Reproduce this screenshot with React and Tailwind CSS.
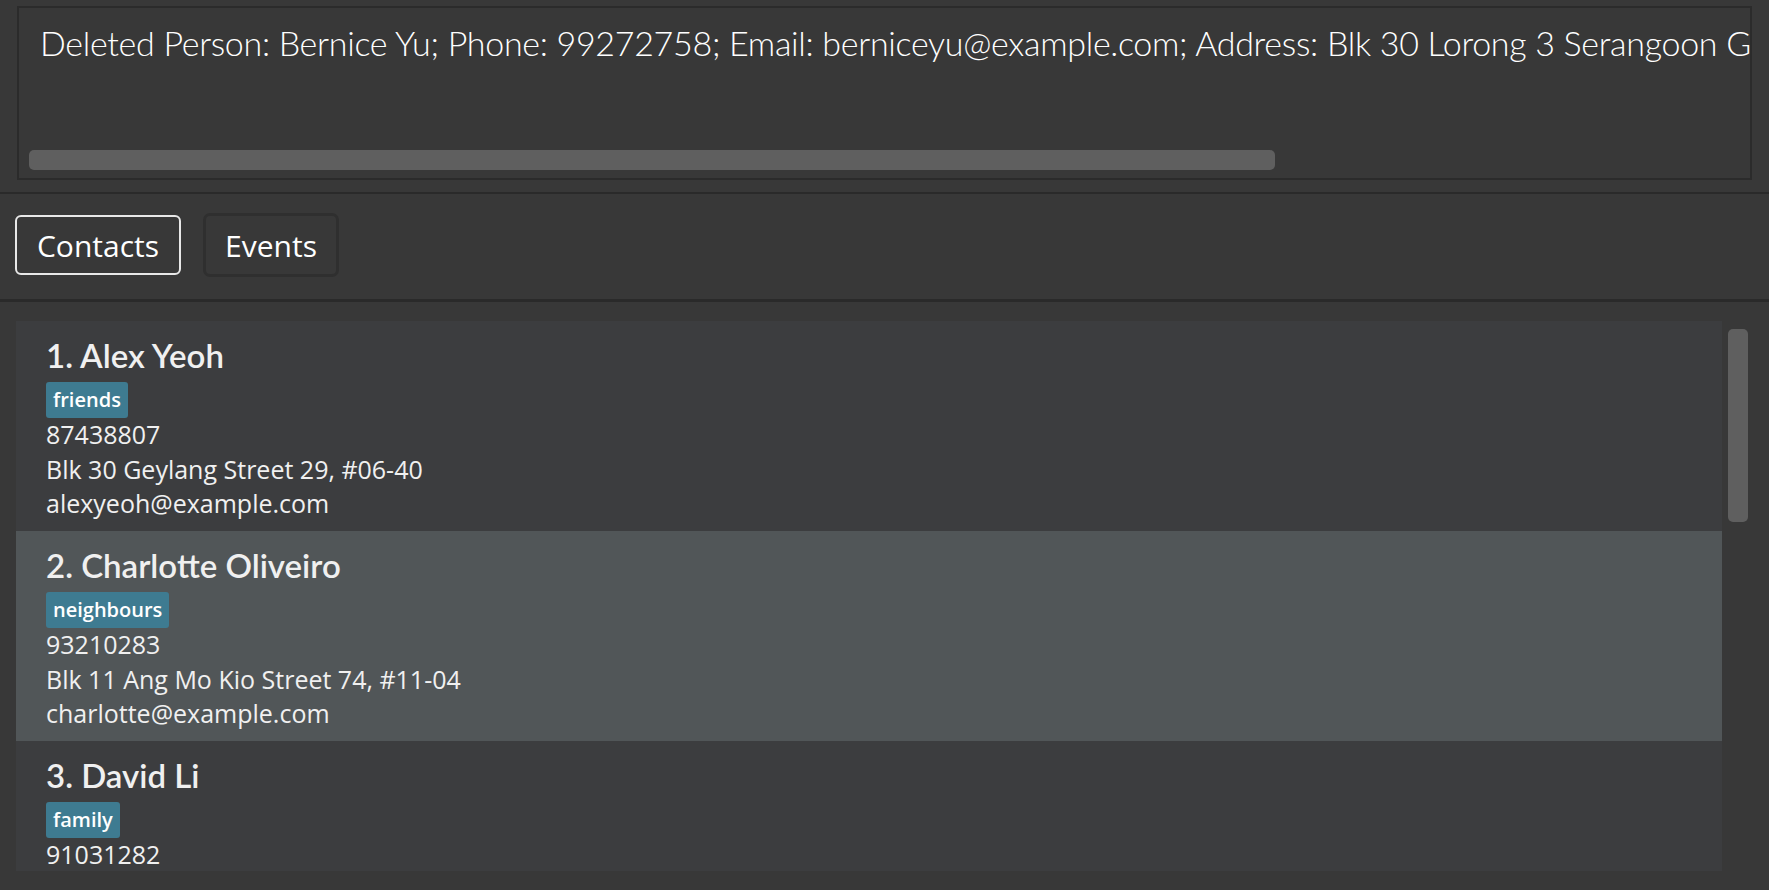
const people = [
  {
    name: "1. Alex Yeoh",
    tag: "friends",
    phone: "87438807",
    address: "Blk 30 Geylang Street 29, #06-40",
    email: "alexyeoh@example.com",
  },
  {
    name: "2. Charlotte Oliveiro",
    tag: "neighbours",
    phone: "93210283",
    address: "Blk 11 Ang Mo Kio Street 74, #11-04",
    email: "charlotte@example.com",
    selected: true,
  },
  {
    name: "3. David Li",
    tag: "family",
    phone: "91031282",
    address: "Blk 436 Serangoon Gardens Street 26, #16-43",
    email: "lidavid@example.com",
  },
];

function PersonCard({ person }) {
  return (
    <div
      className={`h-[210px] shrink-0 pl-[30px] pt-[12px] text-[#f0f0f0] ${
        person.selected ? "bg-[#515658]" : "bg-[#3c3d3f]"
      }`}
    >
      <div
        className="text-[33px] leading-[44px] font-semibold"
        style={{ fontFamily: "Lato, sans-serif" }}
      >
        {person.name}
      </div>
      <div className="flex mt-[5px]">
        <span className="h-[36px] px-[7px] rounded-[3px] bg-[#3e7b91] text-white text-[20px] leading-[36px] font-semibold">
          {person.tag}
        </span>
      </div>
      <div className="text-[25px] leading-[34.5px] -mt-[1px]">{person.phone}</div>
      <div className="text-[25px] leading-[34.5px]">{person.address}</div>
      <div className="text-[25px] leading-[34.5px]">{person.email}</div>
    </div>
  );
}

export default function App() {
  return (
    <div
      className="w-[1769px] h-[890px] bg-[#383838] overflow-hidden flex flex-col"
      style={{ fontFamily: '"Open Sans", "Noto Sans", sans-serif' }}
    >
      <div className="h-[192px] shrink-0 pt-[6px] pl-[17px] pr-[17px]">
        <div className="h-[174px] border-2 border-[#2b2b2b] flex flex-col justify-between overflow-hidden pb-[8px]">
          <div
            className="pl-[21px] pt-[12px] text-[34px] leading-[46px] tracking-[-0.3px] font-light text-white whitespace-nowrap"
            style={{ fontFamily: "Lato, sans-serif" }}
          >
            Deleted Person: Bernice Yu; Phone: 99272758; Email: berniceyu@example.com; Address: Blk 30 Lorong 3 Serangoon Gardens, #07-18; Tags: [colleagues]
          </div>
          <div className="ml-[10px] w-[1246px] h-[20px] rounded-[5px] bg-[#5f5f5f]" />
        </div>
      </div>
      <div className="h-[2px] shrink-0 bg-[#2a2a2a]" />
      <div className="h-[105px] shrink-0 flex items-center gap-[22px] pl-[15px] pb-[3px]">
        <button className="w-[166px] h-[60px] border-2 border-[#e8e8e8] rounded-[6px] text-white text-[30px]">
          Contacts
        </button>
        <button className="w-[136px] h-[64px] border-[3px] border-[#2f2f2f] rounded-[7px] text-white text-[30px]">
          Events
        </button>
      </div>
      <div className="h-[3px] shrink-0 bg-[#2a2a2a]" />
      <div className="flex-1 flex pl-[16px] pt-[19px] pb-[19px] min-h-0">
        <div className="w-[1706px] flex flex-col overflow-hidden">
          {people.map((p) => (
            <PersonCard key={p.name} person={p} />
          ))}
        </div>
        <div className="ml-[6px] mt-[8px] w-[20px] h-[193px] rounded-[5px] bg-[#5f5f5f]" />
      </div>
    </div>
  );
}
